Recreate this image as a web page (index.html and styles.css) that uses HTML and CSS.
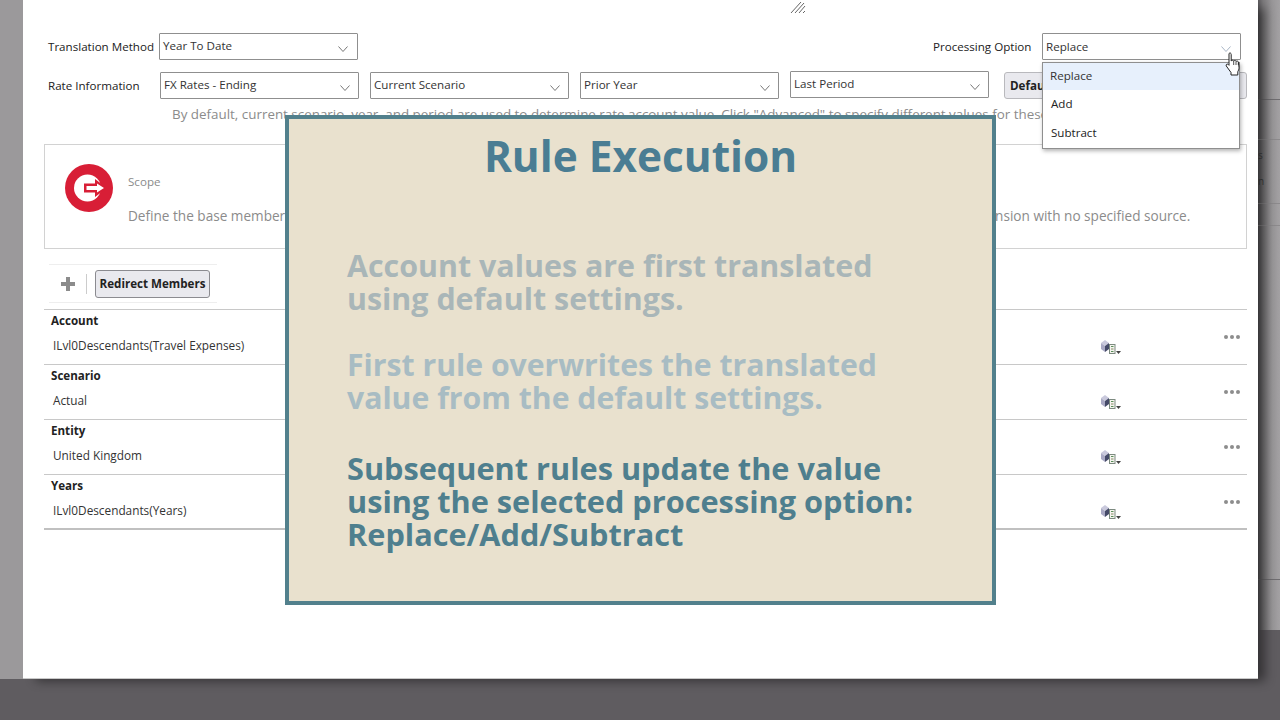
FILE: index.html
```html
<!DOCTYPE html>
<html lang="en">
<head>
<meta charset="utf-8">
<title>Rule Execution</title>
<link rel="stylesheet" href="styles.css">
</head>
<body>
<div class="side-left"></div>
<main class="dialog">
  <svg class="grip" width="16" height="14" viewBox="0 0 16 14"><path d="M1 13 11 2M5 13 14 3M9 13 15 6M13 13 15 11" stroke="#666" stroke-width="1" fill="none"/></svg>

  <div class="form-row row-one">
    <label class="lbl lbl-method">Translation Method</label>
    <div class="select"><span>Year To Date</span><svg class="chev" width="12" height="8" viewBox="0 0 12 8"><path d="M1.500 1.500 6 6.500l4.500-5" fill="none" stroke="#777"/></svg></div>
    <label class="lbl lbl-option">Processing Option</label>
    <div class="select select-open"><span>Replace</span><svg class="chev" width="12" height="8" viewBox="0 0 12 8"><path d="M1.500 1.500 6 6.500l4.500-5" fill="none" stroke="#a9b6c6"/></svg></div>
  </div>

  <div class="form-row row-two">
    <label class="lbl lbl-rate">Rate Information</label>
    <div class="select"><span>FX Rates - Ending</span><svg class="chev" width="12" height="8" viewBox="0 0 12 8"><path d="M1.500 1.500 6 6.500l4.500-5" fill="none" stroke="#777"/></svg></div>
    <div class="select"><span>Current Scenario</span><svg class="chev" width="12" height="8" viewBox="0 0 12 8"><path d="M1.500 1.500 6 6.500l4.500-5" fill="none" stroke="#777"/></svg></div>
    <div class="select"><span>Prior Year</span><svg class="chev" width="12" height="8" viewBox="0 0 12 8"><path d="M1.500 1.500 6 6.500l4.500-5" fill="none" stroke="#777"/></svg></div>
    <div class="select select-raised"><span>Last Period</span><svg class="chev" width="12" height="8" viewBox="0 0 12 8"><path d="M1.500 1.500 6 6.500l4.500-5" fill="none" stroke="#777"/></svg></div>
    <button class="btn-default">Default</button>
  </div>

  <p class="hint">By default, current scenario, year, and period are used to determine rate account value. Click "Advanced" to specify different values for these members.</p>

  <section class="scope">
    <svg class="scope-icon" width="48" height="48" viewBox="0 0 48 48">
      <circle cx="24" cy="24" r="24" fill="#d81e36"/>
      <circle cx="22.500" cy="24" r="13.500" fill="#fff"/>
      <path d="M19 19.500h11V15l12 9-12 9v-4.500H19z" fill="#d81e36"/>
      <path d="M21.500 22h10.500v-2.500L39 24l-7 4.500V26H21.500z" fill="#fff"/>
    </svg>
    <div class="scope-text">
      <div class="scope-title">Scope</div>
      <div class="scope-desc">Define the base members for each dimension to be translated. Rules apply to all members of the selected source and target for any dimension with no specified source.</div>
    </div>
  </section>

  <div class="toolbar">
    <svg class="plus" width="14" height="14" viewBox="0 0 14 14"><path d="M5 0h4v5h5v4H9v5H5V9H0V5h5z" fill="#8c8c8c"/></svg>
    <span class="sep"></span>
    <button class="btn-redirect">Redirect Members</button>
  </div>

  <div class="table">
    <div class="trow">
      <div class="tcell"><div class="tname">Account</div><div class="tval">ILvl0Descendants(Travel Expenses)</div></div>
      <svg class="member" width="21" height="15" viewBox="0 0 21 15"><path d="M1 3 5 0l4 3-4 3z" fill="#c9c9dc"/><path d="M1 3l4 3v6L1 9z" fill="#a9a9c4"/><path d="M9 3v6l-4 3V6z" fill="#454a68"/><rect x="9.500" y="4.500" width="5.500" height="9" fill="#f4f4ee" stroke="#7c8a80"/><path d="M11 6.500h2.500" stroke="#5a8f5a"/><path d="M11 9h2.500" stroke="#8a8a6a"/><path d="M11 11.500h2.500" stroke="#5a8f5a"/><path d="M16 11h5l-2.500 3z" fill="#444"/></svg>
      <div class="dots"><i></i><i></i><i></i></div>
    </div>
    <div class="trow">
      <div class="tcell"><div class="tname">Scenario</div><div class="tval">Actual</div></div>
      <svg class="member" width="21" height="15" viewBox="0 0 21 15"><path d="M1 3 5 0l4 3-4 3z" fill="#c9c9dc"/><path d="M1 3l4 3v6L1 9z" fill="#a9a9c4"/><path d="M9 3v6l-4 3V6z" fill="#454a68"/><rect x="9.500" y="4.500" width="5.500" height="9" fill="#f4f4ee" stroke="#7c8a80"/><path d="M11 6.500h2.500" stroke="#5a8f5a"/><path d="M11 9h2.500" stroke="#8a8a6a"/><path d="M11 11.500h2.500" stroke="#5a8f5a"/><path d="M16 11h5l-2.500 3z" fill="#444"/></svg>
      <div class="dots"><i></i><i></i><i></i></div>
    </div>
    <div class="trow">
      <div class="tcell"><div class="tname">Entity</div><div class="tval">United Kingdom</div></div>
      <svg class="member" width="21" height="15" viewBox="0 0 21 15"><path d="M1 3 5 0l4 3-4 3z" fill="#c9c9dc"/><path d="M1 3l4 3v6L1 9z" fill="#a9a9c4"/><path d="M9 3v6l-4 3V6z" fill="#454a68"/><rect x="9.500" y="4.500" width="5.500" height="9" fill="#f4f4ee" stroke="#7c8a80"/><path d="M11 6.500h2.500" stroke="#5a8f5a"/><path d="M11 9h2.500" stroke="#8a8a6a"/><path d="M11 11.500h2.500" stroke="#5a8f5a"/><path d="M16 11h5l-2.500 3z" fill="#444"/></svg>
      <div class="dots"><i></i><i></i><i></i></div>
    </div>
    <div class="trow trow-last">
      <div class="tcell"><div class="tname">Years</div><div class="tval">ILvl0Descendants(Years)</div></div>
      <svg class="member" width="21" height="15" viewBox="0 0 21 15"><path d="M1 3 5 0l4 3-4 3z" fill="#c9c9dc"/><path d="M1 3l4 3v6L1 9z" fill="#a9a9c4"/><path d="M9 3v6l-4 3V6z" fill="#454a68"/><rect x="9.500" y="4.500" width="5.500" height="9" fill="#f4f4ee" stroke="#7c8a80"/><path d="M11 6.500h2.500" stroke="#5a8f5a"/><path d="M11 9h2.500" stroke="#8a8a6a"/><path d="M11 11.500h2.500" stroke="#5a8f5a"/><path d="M16 11h5l-2.500 3z" fill="#444"/></svg>
      <div class="dots"><i></i><i></i><i></i></div>
    </div>
  </div>

  <ul class="menu">
    <li class="menu-active">Replace</li>
    <li>Add</li>
    <li class="menu-last">Subtract</li>
  </ul>

  <svg class="cursor" width="16" height="24" viewBox="0 0 16 24"><path d="M4 1.500c1-1 2.200-.5 2.200 1V9c.6-1 2-1 2.500 0 .7-.8 2-.7 2.400.3.800-.5 2.200-.2 2.400 1l.5 5c.1 2-.7 3.300-1.200 4.500V23H6v-2.500L1.300 14c-.8-1.300.8-2.600 2-1.500L4 13.300z" fill="#fff" stroke="#222" stroke-width="1"/><path d="M8.700 9v4M11 9.500V13M13.300 10.300V13" stroke="#222" stroke-width=".8" fill="none"/></svg>

  <aside class="overlay">
    <h1 class="ov-title">Rule Execution</h1>
    <p class="ov-p ov-p1">Account values are first translated<br>using default settings.</p>
    <p class="ov-p ov-p2">First rule overwrites the translated<br>value from the default settings.</p>
    <p class="ov-p ov-p3">Subsequent rules update the value<br>using the selected processing option:<br>Replace/Add/Subtract</p>
  </aside>
</main>
<div class="side-right"><span class="sliver sliver-a">s</span><span class="sliver sliver-b">n</span></div>
</body>
</html>
```
FILE: styles.css
```css
* { box-sizing: border-box; }
html, body { margin: 0; height: 720px; overflow: hidden; }
body {
  display: flex;
  align-items: flex-start;
  background: #5f5c60;
  font-family: "Open Sans", "Noto Sans", sans-serif;
  font-size: 11.6px;
  color: #222;
}
.side-left { width: 23px; height: 679px; background: #9b999b; flex: none; }
.side-right {
  width: 22px; height: 630px; flex: none; position: relative; overflow: hidden;
  background:
    linear-gradient(#6f6d70, #6f6d70) 0 99px / 100% 1px no-repeat,
    linear-gradient(#8c8a8c, #8c8a8c) 0 139px / 100% 1px no-repeat,
    linear-gradient(#8c8a8c, #8c8a8c) 0 203px / 100% 1px no-repeat,
    linear-gradient(#8c8a8c, #8c8a8c) 0 225px / 100% 1px no-repeat,
    linear-gradient(#6f6d70, #6f6d70) 0 579px / 100% 1px no-repeat,
    linear-gradient(90deg, #5e5c5f 0, #7c7a7c 5px, #989698 14px, #a3a1a3 22px);
}
.sliver { position: absolute; left: 0; font-size: 10px; color: #444; }
.sliver-a { top: 148px; }
.sliver-b { top: 174px; }
.dialog {
  width: 1235px; height: 679px; flex: none; position: relative; z-index: 1;
  background: #fff;
  padding: 33px 11px 0 21px;
  box-shadow: 10px 5px 10px -3px rgba(0,0,0,.45);
  border-bottom: 1px solid #c9c9c9;
}
.grip { position: absolute; left: 767px; top: 0; }
.form-row { display: flex; align-items: center; height: 27px; padding-left: 4px; }
.row-one { margin-bottom: 12px; }
.lbl { color: #222; white-space: nowrap; flex: none; }
.lbl-method { width: 111px; }
.lbl-rate { width: 112px; }
.lbl-option { width: 99px; margin-left: 564px; margin-right: 10px; }
.select {
  width: 199px; height: 27px; flex: none;
  display: flex; align-items: center; justify-content: space-between;
  border: 1px solid #8f8f8f; background: #fff;
  padding: 0 7px 0 3px;
  margin-right: 11px;
  color: #333;
  border-radius: 1px;
}
.select span { margin-top: -3px; }
.select .chev { margin-top: 4px; }
.row-one .select { padding-right: 8px; }
.row-one .select-open { margin-right: 0; }
.select-raised { position: relative; top: -1px; margin-right: 15px; }
.select-open span { margin-top: 0; }
.btn-default {
  width: 243px; height: 27px; flex: none; text-align: left;
  background: #e9e9ee; border: 1px solid #b9b9bd; border-radius: 3px;
  font: 700 11.6px "Open Sans", sans-serif; color: #222; padding: 0 5px;
}
.hint {
  margin: 5px 0 0; padding-left: 128px; height: 40px; white-space: nowrap; overflow: hidden;
  color: #8b8b8b; font-size: 13.4px; line-height: 20px;
}
.scope {
  height: 105px; border: 1px solid #d2d2d2;
  display: flex; padding: 19px 0 0 20px;
}
.scope-icon { flex: none; }
.scope-text { margin-left: 15px; padding-top: 8px; }
.scope-title { color: #8b8b8b; font-size: 11.6px; line-height: 16px; margin-top: 2px; }
.scope-desc { color: #8b8b8b; font-size: 13.6px; line-height: 20px; margin-top: 16px; white-space: nowrap; }
.toolbar {
  display: flex; align-items: center; height: 39px; margin: 15px 0 6px 5px; width: 168px;
  border-top: 1px solid #eee; border-bottom: 1px solid #eee; padding-left: 12px;
}
.plus { flex: none; }
.sep { width: 1px; height: 20px; background: #ccc; margin: 0 8px 0 11px; }
.btn-redirect {
  width: 115px; height: 28px; background: #e9e9ee; border: 1px solid #8b8b90; border-radius: 3px;
  font: 700 11.6px "Open Sans", sans-serif; color: #222; padding: 0;
  white-space: nowrap;
}
.table { border-top: 1px solid #c8c8c8; }
.trow {
  height: 55px; display: flex; position: relative;
  border-bottom: 1px solid #c8c8c8;
}
.trow-last { border-bottom: 2px solid #c0c0c0; }
.tcell { flex: 1; padding-left: 7px; }
.tname { font-weight: 700; color: #222; line-height: 18px; margin-top: 2px; }
.tval { color: #333; font-size: 11.8px; line-height: 18px; margin: 6px 0 0 2px; }
.member { flex: none; margin: 30px 0 0 0; }
.dots { display: flex; gap: 2px; width: 16px; margin: 25px 7px 0 103px; flex: none; }
.dots i { width: 4px; height: 4px; border-radius: 50%; background: #8d8d8d; flex: none; }
.menu {
  position: absolute; left: 1019px; top: 62px; width: 198px; height: 87px;
  margin: 0; padding: 0; list-style: none;
  background: #fff; border: 1px solid #8f8f8f;
  box-shadow: 1px 2px 4px rgba(0,0,0,.3);
}
.menu li { height: 28px; line-height: 28px; padding-left: 8px; color: #222; }
.menu .menu-active { background: #e7f0fc; color: #333; height: 27px; line-height: 25px; padding-left: 7px; }
.menu .menu-last { line-height: 30px; }
.cursor { position: absolute; left: 1202px; top: 52px; }
.overlay {
  position: absolute; left: 262px; top: 115px; width: 711px; height: 490px;
  background: #e9e1ce; border: 4px solid #52808c;
  padding: 9px 0 0 58px;
}
.ov-title {
  margin: 0 0 65px -58px; text-align: center;
  font: 700 42.4px/56px "Open Sans", sans-serif; color: #4a7d93;
}
.ov-p { margin: 0; font-size: 30.4px; line-height: 33px; font-weight: 700; white-space: nowrap; }
.ov-p1 { color: #a9b6b8; margin-bottom: 33px; }
.ov-p2 { color: #a8bcc3; font-size: 30.2px; margin-bottom: 38px; }
.ov-p3 { color: #4f7f8e; font-size: 30.7px; }
```
